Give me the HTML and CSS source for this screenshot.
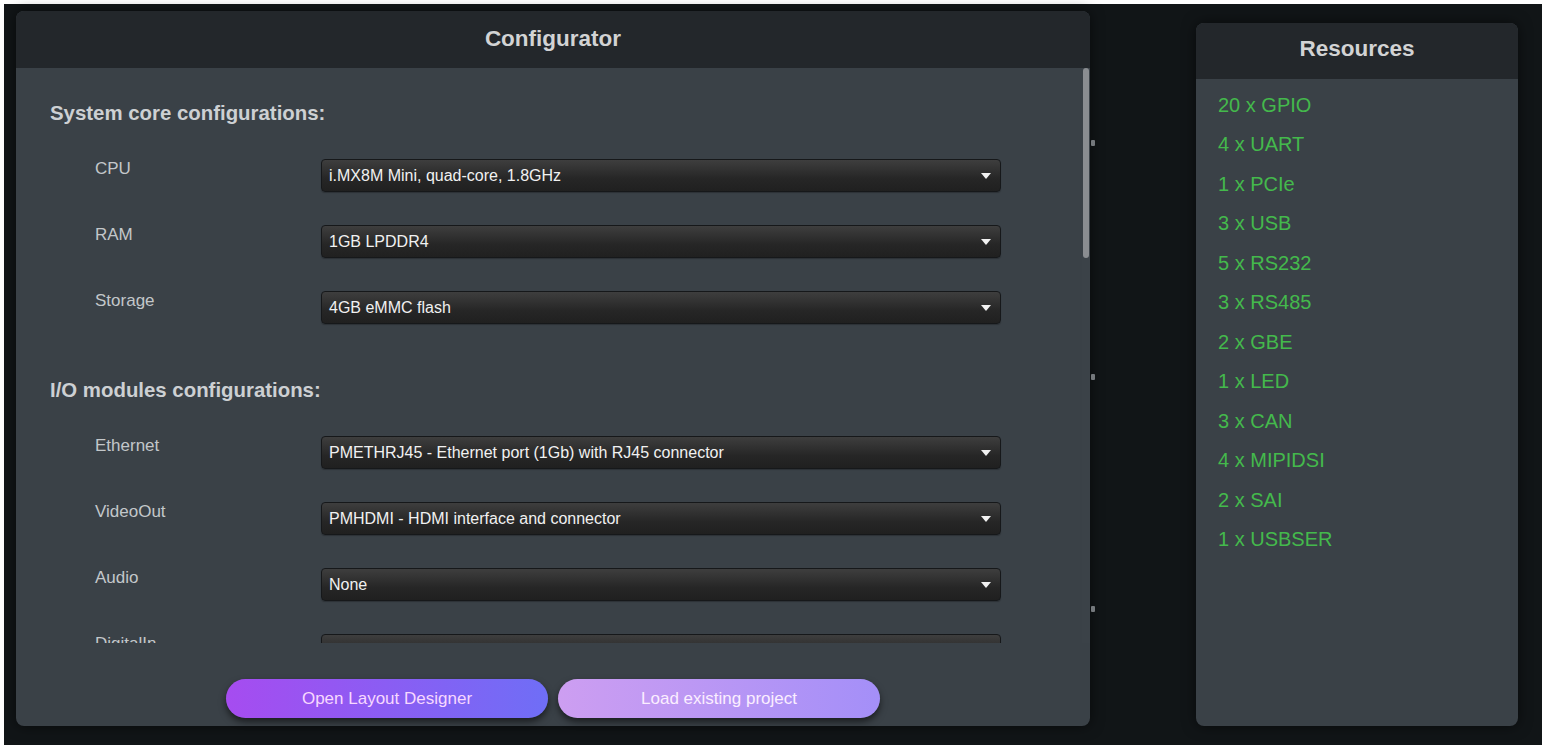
FILE: index.html
```html
<!DOCTYPE html>
<html lang="en">
<head>
<meta charset="utf-8">
<title>Configurator</title>
<link rel="stylesheet" href="styles.css">
</head>
<body>
<div class="app">
  <section class="panel config">
    <header class="panel-head">Configurator</header>
    <div class="config-body">
      <div class="scroll">
        <div class="content">
          <h2 class="section-title">System core configurations:</h2>
          <div class="row"><div class="label">CPU</div><div class="select"><span>i.MX8M Mini, quad-core, 1.8GHz</span><i class="arrow"></i></div></div>
          <div class="row"><div class="label">RAM</div><div class="select"><span>1GB LPDDR4</span><i class="arrow"></i></div></div>
          <div class="row"><div class="label">Storage</div><div class="select"><span>4GB eMMC flash</span><i class="arrow"></i></div></div>
          <h2 class="section-title second">I/O modules configurations:</h2>
          <div class="row"><div class="label">Ethernet</div><div class="select"><span>PMETHRJ45 - Ethernet port (1Gb) with RJ45 connector</span><i class="arrow"></i></div></div>
          <div class="row"><div class="label">VideoOut</div><div class="select"><span>PMHDMI - HDMI interface and connector</span><i class="arrow"></i></div></div>
          <div class="row"><div class="label">Audio</div><div class="select"><span>None</span><i class="arrow"></i></div></div>
          <div class="row"><div class="label">DigitalIn</div><div class="select"><span>None</span><i class="arrow"></i></div></div>
        </div>
        <div class="scrollbar"><div class="thumb"></div></div>
      </div>
      <div class="actions">
        <button class="btn btn-primary">Open Layout Designer</button>
        <button class="btn btn-secondary">Load existing project</button>
      </div>
    </div>
    <span class="handle h1"></span>
    <span class="handle h2"></span>
    <span class="handle h3"></span>
  </section>
  <section class="panel resources">
    <header class="panel-head">Resources</header>
    <ul class="res-list">
      <li>20 x GPIO</li>
      <li>4 x UART</li>
      <li>1 x PCIe</li>
      <li>3 x USB</li>
      <li>5 x RS232</li>
      <li>3 x RS485</li>
      <li>2 x GBE</li>
      <li>1 x LED</li>
      <li>3 x CAN</li>
      <li>4 x MIPIDSI</li>
      <li>2 x SAI</li>
      <li>1 x USBSER</li>
    </ul>
  </section>
</div>
</body>
</html>
```
FILE: styles.css
```css
html, body {
  margin: 0;
  padding: 0;
  background: #ffffff;
}
body {
  font-family: "Liberation Sans", Arial, sans-serif;
}
.app {
  margin: 4px 9px 0 4px;
  height: 741px;
  background: #111517;
  display: flex;
  align-items: flex-start;
  padding: 7px 0 0 12px;
  box-sizing: border-box;
}
.panel {
  background: #3a4147;
  border-radius: 8px;
  overflow: hidden;
  display: flex;
  flex-direction: column;
  box-shadow: 0 0 14px rgba(0, 0, 0, 0.55);
}
.panel-head {
  background: #23272b;
  color: #d2d3d4;
  font-weight: bold;
  font-size: 22.5px;
  text-align: center;
  flex: none;
}
.config {
  width: 1074px;
  height: 715px;
  position: relative;
  overflow: visible;
}
.config .panel-head {
  height: 57px;
  line-height: 56px;
  border-radius: 8px 8px 0 0;
}
.config-body {
  flex: 1;
  display: flex;
  flex-direction: column;
  min-height: 0;
}
.scroll {
  height: 575px;
  display: flex;
  flex: none;
}
.content {
  flex: 1;
  overflow: hidden;
  padding: 34px 0 0 34px;
}
.section-title {
  margin: 0 0 35px 0;
  font-size: 20.4px;
  line-height: 22px;
  font-weight: bold;
  color: #cdd0d3;
}
.section-title.second {
  margin-top: 55px;
}
.row {
  display: flex;
  align-items: flex-start;
  padding-left: 45px;
  margin-bottom: 33px;
}
.label {
  width: 226px;
  flex: none;
  font-size: 17px;
  line-height: 19px;
  color: #c3c7ca;
}
.select {
  width: 680px;
  height: 33px;
  box-sizing: border-box;
  border: 1px solid #16181a;
  border-radius: 4px;
  background: linear-gradient(#3e3e3e, #262626 60%, #202020);
  display: flex;
  align-items: center;
  justify-content: space-between;
  padding: 1px 9px 0 7px;
  color: #f1f1f1;
  font-size: 16px;
  box-shadow: 0 1px 1px rgba(0, 0, 0, 0.25);
}
.arrow {
  width: 0;
  height: 0;
  border-left: 5px solid transparent;
  border-right: 5px solid transparent;
  border-top: 6px solid #f2f2f2;
}
.scrollbar {
  width: 8px;
  flex: none;
  background: #3b4248;
}
.thumb {
  width: 6px;
  margin-left: 1px;
  height: 190px;
  background: #8a8d91;
  border-radius: 3px;
}
.actions {
  flex: 1;
  display: flex;
  justify-content: center;
  align-items: flex-start;
  gap: 10px;
  padding-top: 36px;
}
.btn {
  width: 322px;
  height: 39px;
  border: none;
  border-radius: 20px;
  font-family: "Liberation Sans", Arial, sans-serif;
  font-size: 17px;
  cursor: pointer;
  box-shadow: 0 4px 7px rgba(0, 0, 0, 0.55);
}
.btn-primary {
  background: linear-gradient(90deg, #a64cf0, #6f6ef6);
  color: #f7d8ff;
}
.btn-secondary {
  background: linear-gradient(90deg, #cd9ef1, #a48ff8);
  color: #fbeeff;
}
.handle {
  position: absolute;
  left: 1075px;
  width: 4px;
  height: 6px;
  background: #74787c;
  border-radius: 1px;
}
.h1 { top: 129px; }
.h2 { top: 363px; }
.h3 { top: 595px; }
.resources {
  width: 322px;
  height: 703px;
  margin-left: 106px;
  margin-top: 12px;
}
.resources .panel-head {
  height: 56px;
  line-height: 52px;
}
.res-list {
  list-style: none;
  margin: 0;
  padding: 7px 0 0 22px;
}
.res-list li {
  font-size: 20px;
  line-height: 39.45px;
  color: #44b94c;
}
```
